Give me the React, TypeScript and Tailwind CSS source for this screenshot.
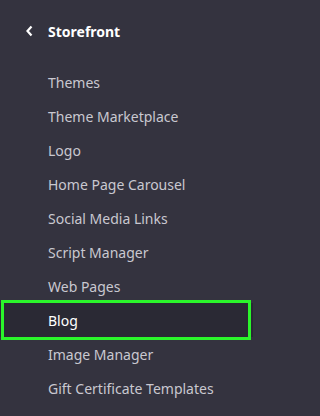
const items = [
  'Themes',
  'Theme Marketplace',
  'Logo',
  'Home Page Carousel',
  'Social Media Links',
  'Script Manager',
  'Web Pages',
  'Blog',
  'Image Manager',
  'Gift Certificate Templates',
]

const active = 'Blog'

export default function App() {
  return (
    <div className="min-h-screen w-full bg-[#34333f]">
      <nav
        className="w-[253px] h-[416px] overflow-hidden"
        style={{ fontFamily: '"Noto Sans", "Open Sans", sans-serif' }}
      >
        {/* Section header */}
        <div className="h-[62px] flex items-center pl-[25px] text-white">
          <svg width="9" height="12" viewBox="0 0 9 12" className="mr-[14px]">
            <path d="M6.5 1.5 L2.5 6 L6.5 10.5" fill="none" stroke="currentColor" strokeWidth="2.2" />
          </svg>
          <span className="text-[14px] font-bold">Storefront</span>
        </div>

        <ul className="pt-[3px]">
          {items.map((label) => {
            const isActive = label === active
            return (
              <li
                key={label}
                className={`relative h-[34px] flex items-center pl-[48px] text-[14px] ${
                  isActive ? 'bg-[#2a2934] text-white' : 'text-[#c9c8d0]'
                }`}
              >
                {label}
                {/* highlight annotation */}
                {isActive && (
                  <span className="absolute left-[1px] right-[2px] -top-[3px] -bottom-[3px] border-[3px] border-[#2bf52b] pointer-events-none" />
                )}
              </li>
            )
          })}
        </ul>
      </nav>
    </div>
  )
}
